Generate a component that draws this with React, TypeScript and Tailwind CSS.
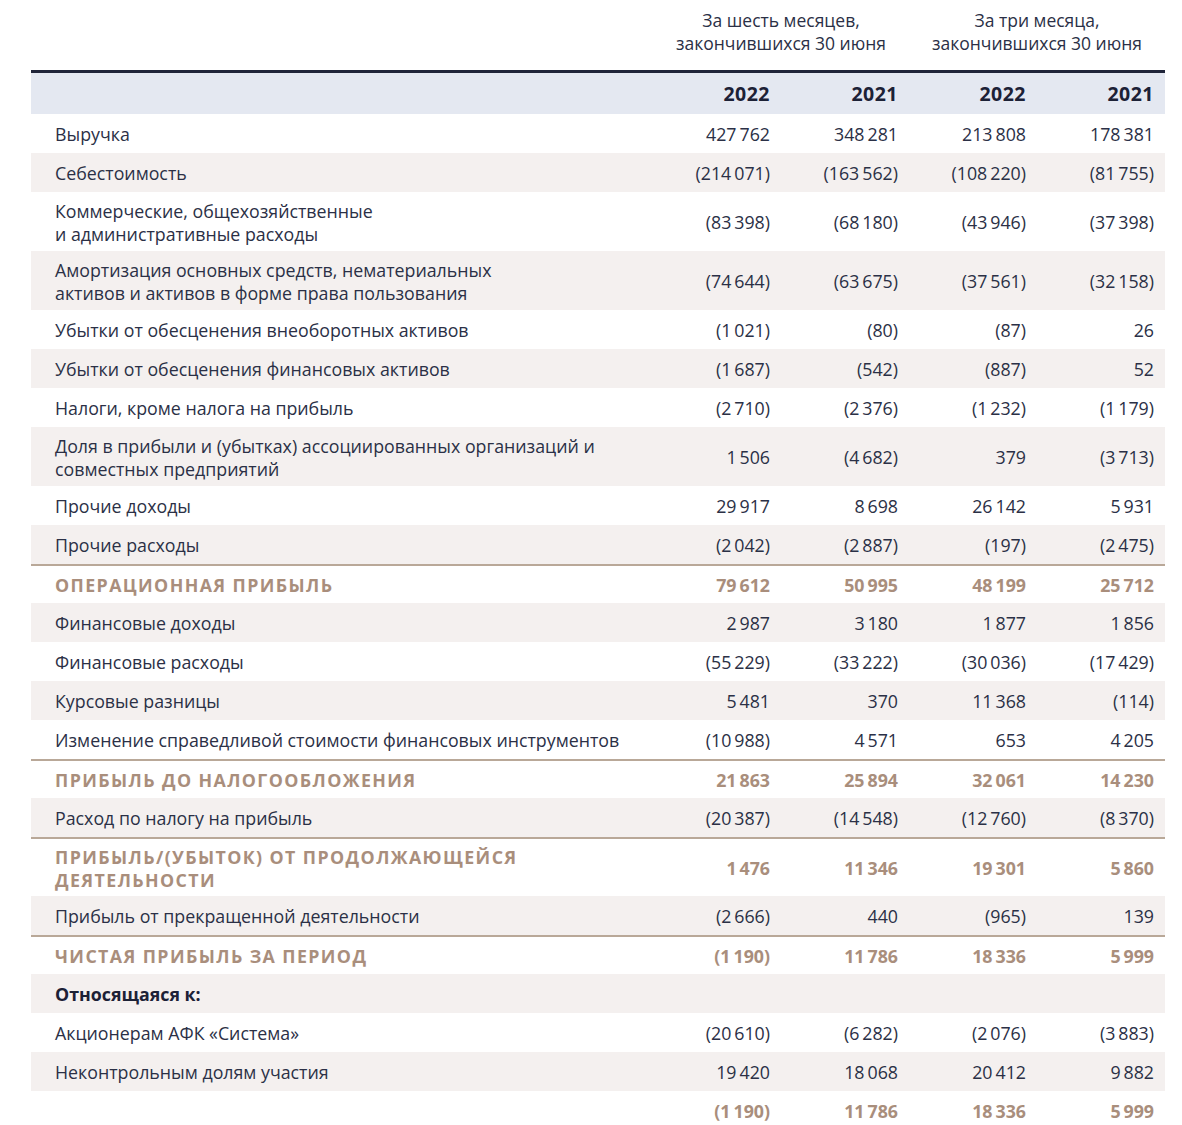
import React from "react";

type Row = {
  label: string[];
  vals: string[];
  kind?: "normal" | "total" | "sub";
  shaded?: boolean;
  lineTop?: boolean;
};

const S = "\u2009";
const n = (s: string) => s.replace(/ /g, S);

const rows: Row[] = [
  { label: ["Выручка"], vals: ["427 762", "348 281", "213 808", "178 381"] },
  { label: ["Себестоимость"], vals: ["(214 071)", "(163 562)", "(108 220)", "(81 755)"], shaded: true },
  { label: ["Коммерческие, общехозяйственные", "и административные расходы"], vals: ["(83 398)", "(68 180)", "(43 946)", "(37 398)"] },
  { label: ["Амортизация основных средств, нематериальных", "активов и активов в форме права пользования"], vals: ["(74 644)", "(63 675)", "(37 561)", "(32 158)"], shaded: true },
  { label: ["Убытки от обесценения внеоборотных активов"], vals: ["(1 021)", "(80)", "(87)", "26"] },
  { label: ["Убытки от обесценения финансовых активов"], vals: ["(1 687)", "(542)", "(887)", "52"], shaded: true },
  { label: ["Налоги, кроме налога на прибыль"], vals: ["(2 710)", "(2 376)", "(1 232)", "(1 179)"] },
  { label: ["Доля в прибыли и (убытках) ассоциированных организаций и", "совместных предприятий"], vals: ["1 506", "(4 682)", "379", "(3 713)"], shaded: true },
  { label: ["Прочие доходы"], vals: ["29 917", "8 698", "26 142", "5 931"] },
  { label: ["Прочие расходы"], vals: ["(2 042)", "(2 887)", "(197)", "(2 475)"], shaded: true },
  { label: ["ОПЕРАЦИОННАЯ ПРИБЫЛЬ"], vals: ["79 612", "50 995", "48 199", "25 712"], kind: "total", lineTop: true },
  { label: ["Финансовые доходы"], vals: ["2 987", "3 180", "1 877", "1 856"], shaded: true },
  { label: ["Финансовые расходы"], vals: ["(55 229)", "(33 222)", "(30 036)", "(17 429)"] },
  { label: ["Курсовые разницы"], vals: ["5 481", "370", "11 368", "(114)"], shaded: true },
  { label: ["Изменение справедливой стоимости финансовых инструментов"], vals: ["(10 988)", "4 571", "653", "4 205"] },
  { label: ["ПРИБЫЛЬ ДО НАЛОГООБЛОЖЕНИЯ"], vals: ["21 863", "25 894", "32 061", "14 230"], kind: "total", lineTop: true },
  { label: ["Расход по налогу на прибыль"], vals: ["(20 387)", "(14 548)", "(12 760)", "(8 370)"], shaded: true },
  { label: ["ПРИБЫЛЬ/(УБЫТОК) ОТ ПРОДОЛЖАЮЩЕЙСЯ", "ДЕЯТЕЛЬНОСТИ"], vals: ["1 476", "11 346", "19 301", "5 860"], kind: "total", lineTop: true },
  { label: ["Прибыль от прекращенной деятельности"], vals: ["(2 666)", "440", "(965)", "139"], shaded: true },
  { label: ["ЧИСТАЯ ПРИБЫЛЬ ЗА ПЕРИОД"], vals: ["(1 190)", "11 786", "18 336", "5 999"], kind: "total", lineTop: true },
  { label: ["Относящаяся к:"], vals: ["", "", "", ""], kind: "sub", shaded: true },
  { label: ["Акционерам АФК «Система»"], vals: ["(20 610)", "(6 282)", "(2 076)", "(3 883)"] },
  { label: ["Неконтрольным долям участия"], vals: ["19 420", "18 068", "20 412", "9 882"], shaded: true },
  { label: [""], vals: ["(1 190)", "11 786", "18 336", "5 999"], kind: "total" },
];

export default function App() {
  return (
    <div
      className="w-[1182px] min-h-[1125px] bg-white text-[#2b3046] pl-[31px]"
      style={{ fontFamily: '"Open Sans", "Noto Sans", sans-serif' }}
    >
      <div className="w-[1134px]">
        <div className="grid grid-cols-[622px_256px_256px] pt-[9px] h-[70px] text-[17.5px] leading-[23px] text-[#2b3046]">
          <div />
          <div className="text-center">За шесть месяцев,<br />закончившихся 30 июня</div>
          <div className="text-center">За три месяца,<br />закончившихся 30 июня</div>
        </div>
        <div className="h-[3px] bg-[#1f2439]" />
        <div className="grid grid-cols-[622px_128px_128px_128px_128px] h-[41px] items-center bg-[#e4e8f1] font-bold text-[19.5px] tracking-[0.5px] text-[#1c2136]">
          <div />
          <div className="text-right pr-[11px]">2022</div>
          <div className="text-right pr-[11px]">2021</div>
          <div className="text-right pr-[11px]">2022</div>
          <div className="text-right pr-[11px]">2021</div>
        </div>
        {rows.map((r, i) => {
          const dbl = r.label.length > 1;
          const total = r.kind === "total";
          const sub = r.kind === "sub";
          return (
            <div
              key={i}
              className={
                "grid grid-cols-[622px_128px_128px_128px_128px] items-center pt-[2px] text-[17.8px] " +
                (dbl ? "h-[59px] " : "h-[39px] ") +
                (r.shaded ? "bg-[#f4f0ef] " : "bg-white ") +
                (r.lineTop ? "border-t-2 border-[#b9a898] " : "") +
                (total ? "font-bold text-[#a98e7c] " : "")
              }
            >
              <div
                className={
                  "pl-[24px] leading-[23px] " +
                  (sub ? "font-bold text-[#1c2136] " : "") +
                  (total ? "tracking-[1.4px] " : "")
                }
              >
                {r.label.map((l, j) => (
                  <div key={j}>{l}</div>
                ))}
              </div>
              {r.vals.map((v, j) => (
                <div key={j} className="text-right pr-[11px] whitespace-nowrap">
                  {n(v)}
                </div>
              ))}
            </div>
          );
        })}
      </div>
    </div>
  );
}
